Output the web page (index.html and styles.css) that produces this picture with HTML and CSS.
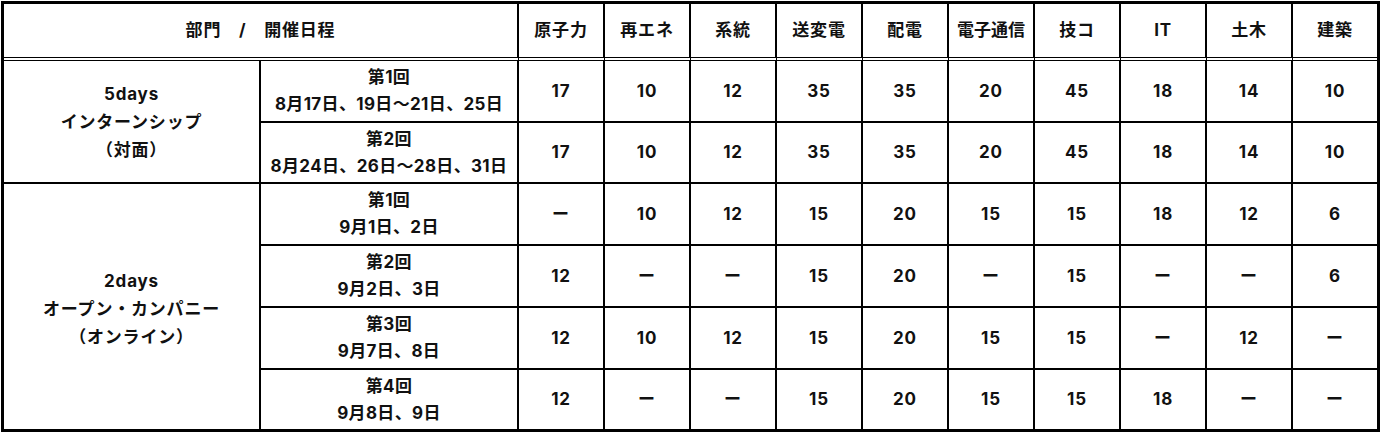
FILE: index.html
```html
<!DOCTYPE html>
<html lang="ja">
<head>
<meta charset="utf-8">
<title>インターンシップ 開催日程</title>
<link rel="stylesheet" href="styles.css">
</head>
<body>
<div class="sheet">
  <div class="cell head span2">部門　/　開催日程</div>
  <div class="cell head">原子力</div>
  <div class="cell head">再エネ</div>
  <div class="cell head">系統</div>
  <div class="cell head">送変電</div>
  <div class="cell head">配電</div>
  <div class="cell head tight">電子通信</div>
  <div class="cell head">技コ</div>
  <div class="cell head">IT</div>
  <div class="cell head">土木</div>
  <div class="cell head last-col">建築</div>

  <div class="cell group g5">5days<br>インターンシップ<br>（対面）</div>
  <div class="cell sched">第1回<br>8月17日、19日～21日、25日</div>
  <div class="cell">17</div><div class="cell">10</div><div class="cell">12</div><div class="cell">35</div><div class="cell">35</div>
  <div class="cell">20</div><div class="cell">45</div><div class="cell">18</div><div class="cell">14</div><div class="cell last-col">10</div>

  <div class="cell sched">第2回<br>8月24日、26日～28日、31日</div>
  <div class="cell">17</div><div class="cell">10</div><div class="cell">12</div><div class="cell">35</div><div class="cell">35</div>
  <div class="cell">20</div><div class="cell">45</div><div class="cell">18</div><div class="cell">14</div><div class="cell last-col">10</div>

  <div class="cell group g2 last-row">2days<br>オープン・カンパニー<br>（オンライン）</div>
  <div class="cell sched">第1回<br>9月1日、2日</div>
  <div class="cell">ー</div><div class="cell">10</div><div class="cell">12</div><div class="cell">15</div><div class="cell">20</div>
  <div class="cell">15</div><div class="cell">15</div><div class="cell">18</div><div class="cell">12</div><div class="cell last-col">6</div>

  <div class="cell sched">第2回<br>9月2日、3日</div>
  <div class="cell">12</div><div class="cell">ー</div><div class="cell">ー</div><div class="cell">15</div><div class="cell">20</div>
  <div class="cell">ー</div><div class="cell">15</div><div class="cell">ー</div><div class="cell">ー</div><div class="cell last-col">6</div>

  <div class="cell sched">第3回<br>9月7日、8日</div>
  <div class="cell">12</div><div class="cell">10</div><div class="cell">12</div><div class="cell">15</div><div class="cell">20</div>
  <div class="cell">15</div><div class="cell">15</div><div class="cell">ー</div><div class="cell">12</div><div class="cell last-col">ー</div>

  <div class="cell sched last-row">第4回<br>9月8日、9日</div>
  <div class="cell last-row">12</div><div class="cell last-row">ー</div><div class="cell last-row">ー</div><div class="cell last-row">15</div><div class="cell last-row">20</div>
  <div class="cell last-row">15</div><div class="cell last-row">15</div><div class="cell last-row">18</div><div class="cell last-row">ー</div><div class="cell last-row last-col">ー</div>
</div>
</body>
</html>
```
FILE: styles.css
```css
html, body {
  margin: 0;
  padding: 0;
  background: #ffffff;
}

body {
  font-family: Inter, "Noto Sans CJK JP", sans-serif;
  font-weight: 700;
  font-size: 17px;
  letter-spacing: 0.8px;
  color: #111111;
}

.sheet {
  margin: 1px 0 0 1px;
  width: max-content;
  display: grid;
  grid-template-columns: 257px 258px repeat(9, 86px) 84px;
  grid-template-rows: 57px 62px 61px 62px 62px 62px 59px;
  border: 3px solid #000;
  background: #fff;
}

.cell {
  box-sizing: border-box;
  display: flex;
  align-items: center;
  justify-content: center;
  text-align: center;
  line-height: 27px;
  border-right: 2px solid #000;
  border-bottom: 2px solid #000;
  white-space: nowrap;
}

.head {
  border-bottom: 4px double #000;
}

.tight {
  letter-spacing: 0;
}

.sched {
  letter-spacing: 0.35px;
}

.span2 {
  grid-column: span 2;
}

.group {
  grid-column: 1;
  line-height: 28px;
}

.g5 {
  grid-row: 2 / span 2;
}

.g2 {
  grid-row: 4 / span 4;
  padding-top: 4px;
}

.last-col {
  border-right: none;
}

.last-row {
  border-bottom: none;
}
```
